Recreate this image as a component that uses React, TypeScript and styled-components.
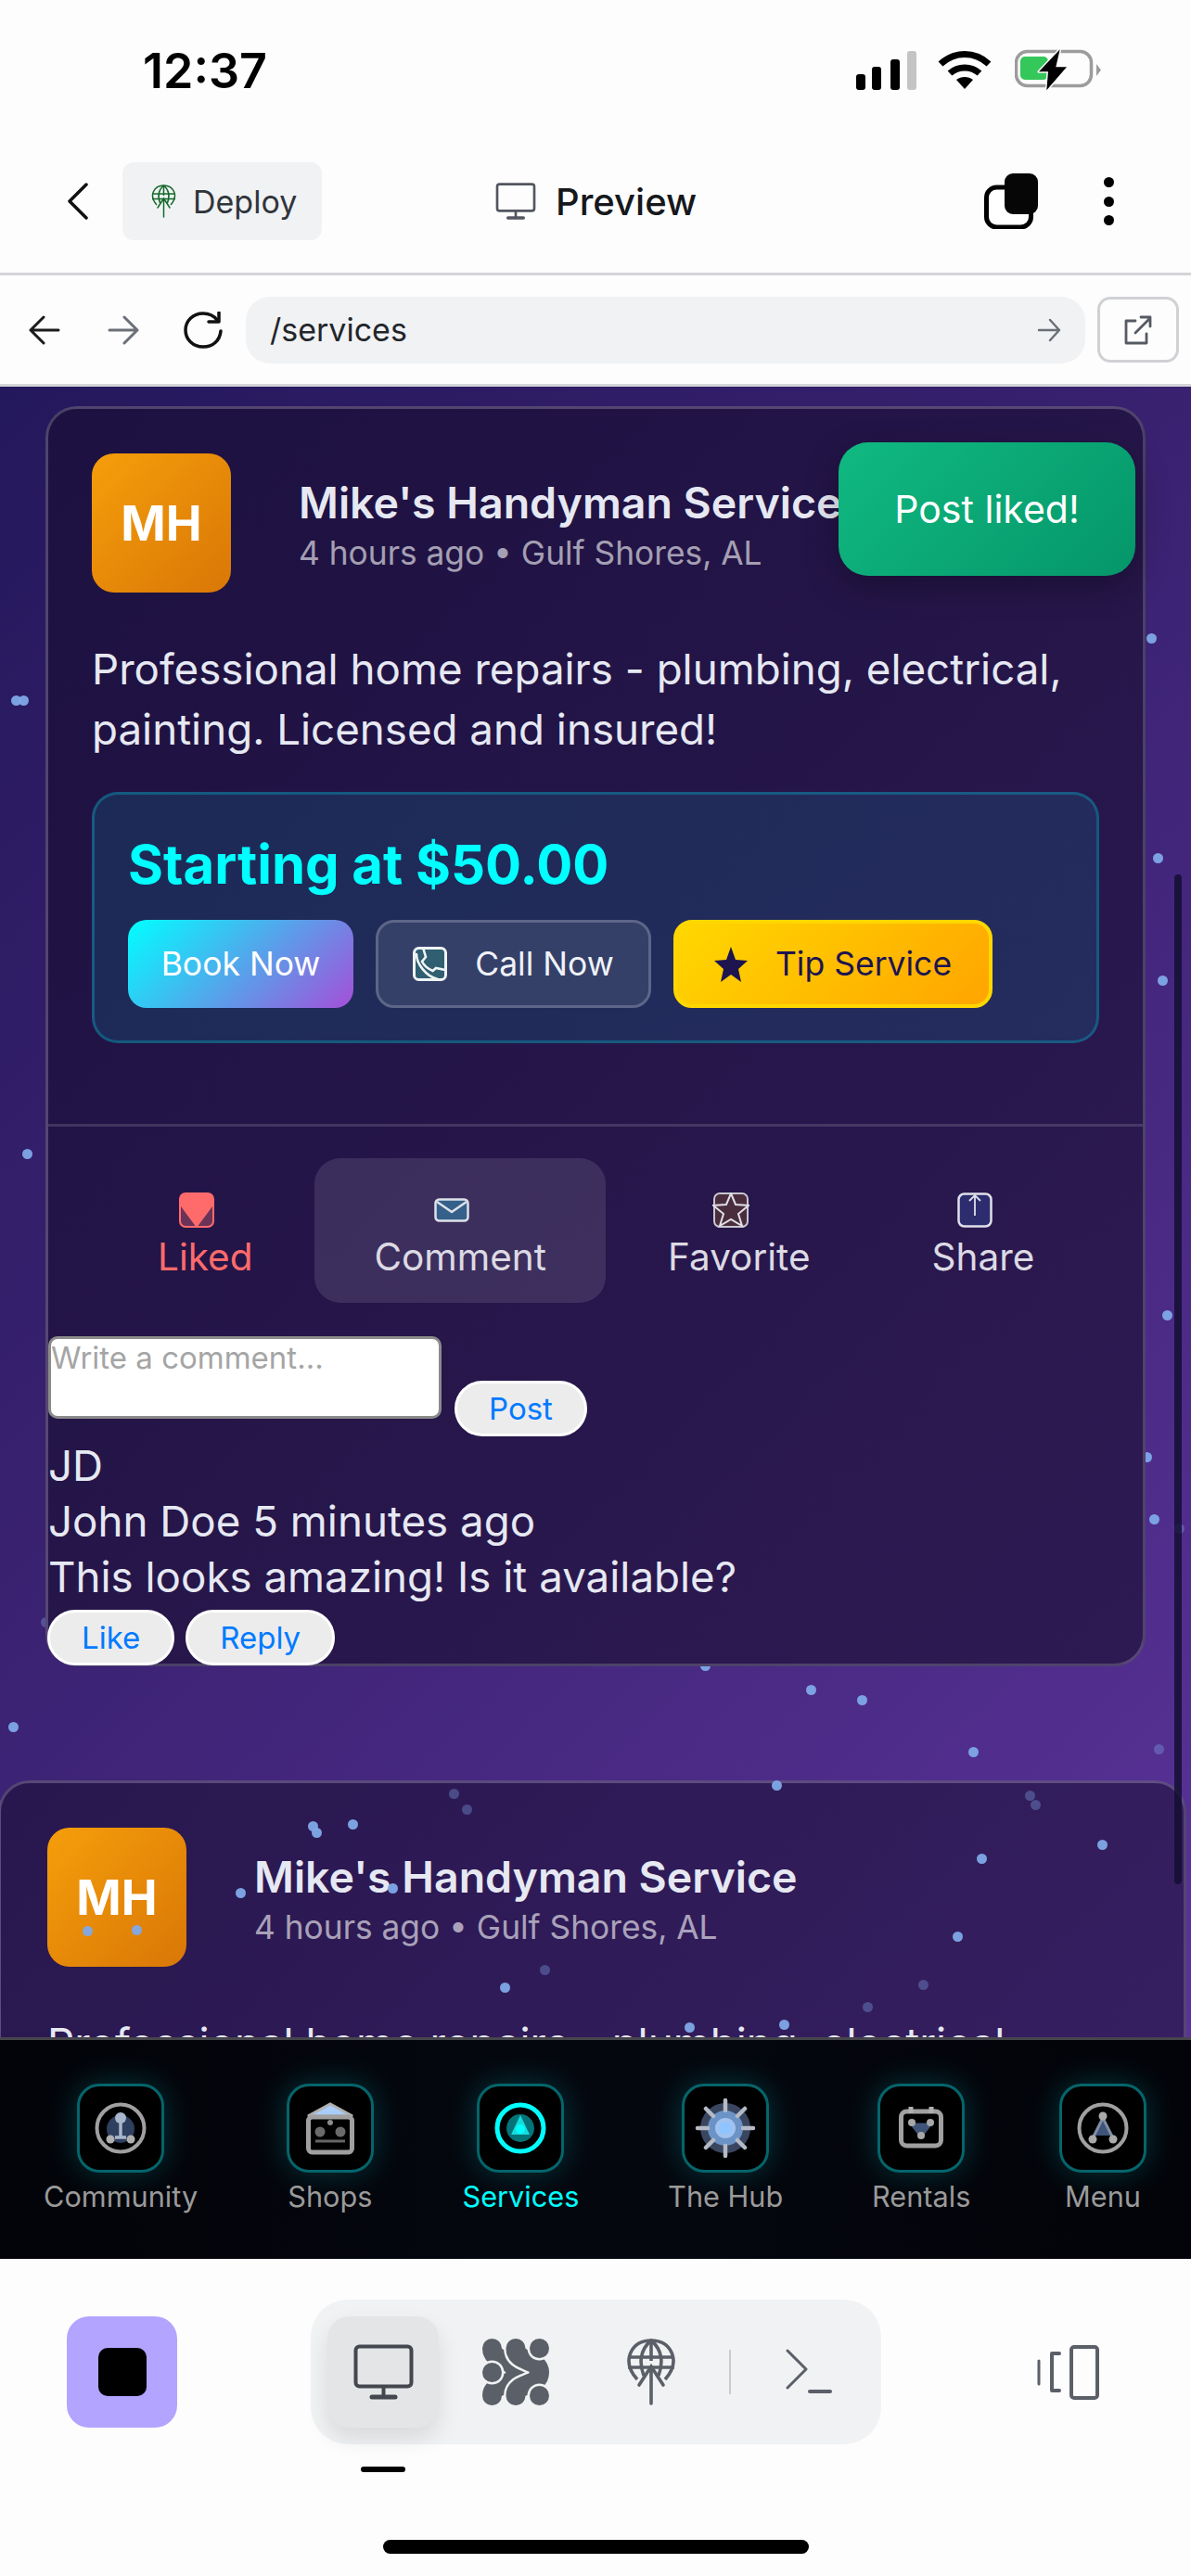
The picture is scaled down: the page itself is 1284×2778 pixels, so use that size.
import styled, { createGlobalStyle } from "styled-components";

const GlobalStyle = createGlobalStyle`
  html, body { margin: 0; padding: 0; background: #fdfdfd; }
  * { box-sizing: border-box; }
  body { font-family: Inter, "Noto Sans", sans-serif; }
`;

// [x, y, faint] in page pixels
const dots: [number, number, boolean][] = [
  [1241, 689, false], [17, 756, false], [25, 756, false], [1248, 926, false], [1253, 1058, false],
  [29, 1245, false], [1258, 1419, false], [1236, 1572, false], [1244, 1639, false], [1271, 1649, true], [49, 1750, true],
  [760, 1797, false], [874, 1823, false], [929, 1834, false], [14, 1863, false], [1049, 1890, false], [1249, 1887, true],
  [489, 1935, true], [503, 1952, true], [837, 1926, false], [1110, 1937, true], [1116, 1947, true],
  [337, 1970, false], [341, 1977, false], [380, 1968, false], [1188, 1990, false], [1058, 2005, false],
  [259, 2042, false], [423, 2037, false], [94, 2083, false], [147, 2082, false], [1032, 2089, false],
  [587, 2125, true], [544, 2144, false], [995, 2141, true], [935, 2165, true], [845, 2184, false], [743, 2187, false],
];

function DeployGlobe({ color, width = 2 }: { color: string; width?: number }) {
  return (
    <svg viewBox="0 0 54 72" width="100%" height="100%" fill="none" stroke={color} strokeWidth={width * 1.5}>
      <path d="M12 44C3 34 1 24 5 15 9 6 17 2 27 2s18 4 22 13c4 9 2 19-7 29" />
      <path d="M19 40C14 26 15 12 27 2c12 10 13 24 8 38" />
      <path d="M27 2v22M2 20h50M2 31h50" />
      <path d="M27 70V33M14 50l13-20 13 20" strokeLinecap="round" />
    </svg>
  );
}

function Monitor({ color }: { color: string }) {
  return (
    <svg viewBox="0 0 65 60" width="100%" height="100%" fill="none" stroke={color}>
      <rect x="2.5" y="2.5" width="60" height="43" rx="4" strokeWidth="4" />
      <path d="M32.5 46v10" strokeWidth="4" />
      <path d="M20 57h25" strokeWidth="5" strokeLinecap="round" />
    </svg>
  );
}

function NavIcon({ kind }: { kind: string }) {
  const gray = "#a0a0a0";
  return (
    <svg viewBox="0 0 66 66" width="66" height="66" fill="none">
      {kind === "community" && (
        <>
          <circle cx="33" cy="33" r="25.5" stroke={gray} strokeWidth="4" />
          <circle cx="33" cy="34" r="15" fill="#2f3f5f" />
          <circle cx="33" cy="22" r="6" fill="#a9b7cc" />
          <path d="M33 24v18M27 43h12" stroke="#a9b7cc" strokeWidth="3.5" />
          <circle cx="22" cy="45" r="4.5" fill="#b0b0b0" />
          <circle cx="44" cy="45" r="4.5" fill="#b0b0b0" />
        </>
      )}
      {kind === "shops" && (
        <>
          <path d="M9 20 33 7l24 13z" fill="#a9cdfa" stroke="#b0b0b0" strokeWidth="3" />
          <rect x="9.5" y="21" width="47" height="38" rx="4" stroke={gray} strokeWidth="5" />
          <circle cx="33" cy="27" r="3" fill="#8c8c8c" />
          <circle cx="22" cy="37" r="5.5" fill="#6a6a6a" />
          <circle cx="44" cy="37" r="5.5" fill="#6a6a6a" />
          <path d="M17 47h32" stroke="#666" strokeWidth="3" />
        </>
      )}
      {kind === "services" && (
        <>
          <circle cx="33" cy="33" r="25" stroke="#00ffff" strokeWidth="5" />
          <circle cx="33" cy="33" r="15" fill="#057478" />
          <path d="M33 19 43 40H23z" fill="#15dcdc" />
          <circle cx="33" cy="34" r="5" fill="#00ffff" />
        </>
      )}
      {kind === "hub" && (
        <>
          <circle cx="33" cy="33" r="27" fill="#3a4660" />
          <circle cx="33" cy="33" r="19" fill="#6b93c6" />
          <circle cx="33" cy="33" r="11" fill="#a2c3ee" />
          <circle cx="33" cy="33" r="7" fill="#8fc4ff" />
          <path d="M33 3v11M33 52v11M3 33h11M52 33h11M12 12l8 8M46 46l8 8M54 12l-8 8M20 46l-8 8" stroke="#b4bbc6" strokeWidth="4.5" strokeLinecap="round" />
        </>
      )}
      {kind === "rentals" && (
        <>
          <rect x="11.5" y="15" width="43" height="37" rx="6" stroke={gray} strokeWidth="5" />
          <path d="M22 10v7M44 10v7" stroke="#b0b0b0" strokeWidth="5" />
          <path d="M23 29 43 29 33 42z" fill="#3f5578" stroke="#3f5578" strokeWidth="3" />
          <circle cx="23" cy="27" r="4" fill="#a8a8a8" />
          <circle cx="43" cy="27" r="4" fill="#a8a8a8" />
          <circle cx="33" cy="41" r="4" fill="#a8a8a8" />
        </>
      )}
      {kind === "menu" && (
        <>
          <circle cx="33" cy="33" r="25.5" stroke={gray} strokeWidth="4" />
          <path d="M33 22 44 41H22z" fill="#40547a" />
          <path d="M33 22 23 42M33 22l10 20" stroke="#7f8da3" strokeWidth="3" />
          <circle cx="33" cy="20" r="4.5" fill="#aaa" />
          <circle cx="22" cy="45" r="4.5" fill="#aaa" />
          <circle cx="44" cy="45" r="4.5" fill="#aaa" />
        </>
      )}
    </svg>
  );
}

// left strand, then right strand drawn over it with a halo so a gap shows between them
const leftStrand = "M10.5 10.5C10.5 26 36 21 36 36.5 36 52 10.5 47 10.5 61.5";
const rightStrand = "M36 10.5C36 26 61.5 21 61.5 36.5 61.5 52 36 47 36 61.5";

function WeaveIcon() {
  const ink = "#5b5f68";
  const pill = "#f1f2f4";
  return (
    <svg viewBox="0 0 73 72" width="73" height="72" fill="none" strokeLinecap="round">
      <path d={leftStrand} stroke={ink} strokeWidth="21" />
      <path d={rightStrand} stroke={pill} strokeWidth="26" />
      <path d={rightStrand} stroke={ink} strokeWidth="21" />
      {[[61.5, 10.5], [10.5, 36.5], [61.5, 61.5]].map(([cx, cy]) => (
        <circle key={cx + "-" + cy} cx={cx} cy={cy} r="10.5" fill={ink} stroke={pill} strokeWidth="5" paintOrder="stroke" />
      ))}
    </svg>
  );
}

const navItems = [
  { kind: "community", label: "Community" },
  { kind: "shops", label: "Shops" },
  { kind: "services", label: "Services", active: true },
  { kind: "hub", label: "The Hub" },
  { kind: "rentals", label: "Rentals" },
  { kind: "menu", label: "Menu" },
];

function PostHead() {
  return (
    <PostHeader>
      <Avatar>MH</Avatar>
      <div>
        <Title>Mike's Handyman Service</Title>
        <Sub>4 hours ago • Gulf Shores, AL</Sub>
      </div>
    </PostHeader>
  );
}

const bodyText = "Professional home repairs - plumbing, electrical, painting. Licensed and insured!";

export default function App() {
  return (
    <Page>
      <GlobalStyle />
      <StatusBar>
        <Time>12:37</Time>
        <StatusIcons>
          <svg width="65" height="42" viewBox="0 0 65 42">
            <rect x="0" y="25" width="10" height="17" rx="3" fill="#000" />
            <rect x="17" y="17" width="10" height="25" rx="3" fill="#000" />
            <rect x="37" y="9" width="10" height="33" rx="3" fill="#000" />
            <rect x="55" y="0" width="10" height="42" rx="3" fill="#c4c4c4" />
          </svg>
          <svg width="58" height="42" viewBox="0 0 58 42" fill="none" stroke="#000" strokeWidth="7">
            <path d="M3 14C18 0 40 0 55 14" />
            <path d="M13 24c9-8 23-8 32 0" />
            <path d="M29 41 20 31c5-4 13-4 18 0z" fill="#000" stroke="none" />
          </svg>
          <svg width="94" height="46" viewBox="0 0 94 46" fill="none">
            <rect x="1.5" y="2.5" width="81" height="37" rx="12" stroke="#9c9c9c" strokeWidth="3.5" />
            <rect x="6" y="8" width="30" height="25" rx="5" fill="#34c759" />
            <path d="M88 16l5 6.5-5 6.5z" fill="#9c9c9c" />
            <path d="M48.7.3 26 24.3h10L34.3 44.3 56 19.3H44.3z" fill="#000" stroke="#fdfdfd" strokeWidth="3" strokeLinejoin="round" paintOrder="stroke" />
          </svg>
        </StatusIcons>
      </StatusBar>

      <TopBar>
        <IconSlot $w={23} $h={40}>
          <svg viewBox="0 0 23 40" width="23" height="40" fill="none" stroke="#111" strokeWidth="3.5" strokeLinecap="round" strokeLinejoin="round">
            <path d="M21 2 3 20l18 18" />
          </svg>
        </IconSlot>
        <DeployButton>
          <IconSlot $w={27} $h={36}>
            <DeployGlobe color="#15692b" />
          </IconSlot>
          Deploy
        </DeployButton>
        <PreviewLabel>
          <IconSlot $w={44} $h={40}>
            <Monitor color="#52565f" />
          </IconSlot>
          Preview
        </PreviewLabel>
        <CopyIcon>
          <svg viewBox="0 0 58 60" width="58" height="60">
            <rect x="2.5" y="15" width="48" height="43" rx="11" fill="#fff" stroke="#000" strokeWidth="5" />
            <rect x="22" y="0" width="36" height="44" rx="9" fill="#060606" />
          </svg>
        </CopyIcon>
        <MoreDots>
          <i />
          <i />
          <i />
        </MoreDots>
      </TopBar>

      <UrlBar>
        <IconSlot $w={34} $h={32}>
          <svg viewBox="0 0 34 32" width="34" height="32" fill="none" stroke="#1b1b1b" strokeWidth="3" strokeLinecap="round" strokeLinejoin="round">
            <path d="M32 16H2M16 2 2 16l14 14" />
          </svg>
        </IconSlot>
        <IconSlot $w={34} $h={32} $left={51}>
          <svg viewBox="0 0 34 32" width="34" height="32" fill="none" stroke="#6b7078" strokeWidth="3" strokeLinecap="round" strokeLinejoin="round">
            <path d="M2 16h30M18 2l14 14-14 14" />
          </svg>
        </IconSlot>
        <IconSlot $w={44} $h={40} $left={47}>
          <svg viewBox="0 0 44 40" width="44" height="40" fill="none" stroke="#111" strokeWidth="3.5" strokeLinecap="round" strokeLinejoin="round">
            <path d="M37 9C33 4 28 2 22 2 11 2 3 10 3 20s8 18 19 18 18-7 19-17" />
            <path d="M39 1v10H28" />
          </svg>
        </IconSlot>
        <UrlField>
          /services
          <IconSlot $w={26} $h={26}>
            <svg viewBox="0 0 26 26" width="26" height="26" fill="none" stroke="#6b7078" strokeWidth="2.5" strokeLinecap="round" strokeLinejoin="round">
              <path d="M2 13h22M14 2l10 11-10 11" />
            </svg>
          </IconSlot>
        </UrlField>
        <OpenButton>
          <svg viewBox="0 0 32 32" width="32" height="32" fill="none" stroke="#555a63" strokeWidth="2.8" strokeLinecap="round" strokeLinejoin="round">
            <path d="M13 6H3v24h22V20" />
            <path d="M13 19 29 3M19 2h10v10" />
          </svg>
        </OpenButton>
      </UrlBar>

      <Viewport>
        <Card>
          <Toast>Post liked!</Toast>
          <PostBody>
            <PostHead />
            <BodyText>{bodyText}</BodyText>
            <PriceBox>
              <Price>Starting at $50.00</Price>
              <PriceActions>
                <BookButton>Book Now</BookButton>
                <CallButton>
                  <svg viewBox="0 0 37 37" width="37" height="37" fill="none" stroke="#f0f3f6" strokeWidth="2.6" strokeLinecap="round">
                    <rect x="1.5" y="1.5" width="34" height="34" rx="5" fill="#2f5f70" strokeWidth="3" />
                    <path d="M11.6 3 14 11 10 16C12 20 17 24 21.6 26L25 23 35 25" />
                    <path d="M4 8C4 18 14 32 27 35" />
                  </svg>
                  Call Now
                </CallButton>
                <TipButton>
                  <svg viewBox="0 0 36 38" width="36" height="38" fill="#1d1450">
                    <path d="M18 0l5 14 13 1-10 9 3 14-11-8-11 8 3-14L0 15l13-1z" />
                  </svg>
                  Tip Service
                </TipButton>
              </PriceActions>
            </PriceBox>
          </PostBody>
          <Actions>
            <ActionButton $color="#ff6b6b">
              <ActionIcon>
                <svg viewBox="0 0 38 38" width="38" height="38">
                  <rect x="1" y="1" width="36" height="36" rx="6" fill="#6b3358" stroke="#ff6b6b" strokeWidth="2" />
                  <path d="M2 6c0-3 2-5 5-5h24c3 0 5 2 5 5v9L19 38 2 15z" fill="#ff6b6b" />
                </svg>
              </ActionIcon>
              Liked
            </ActionButton>
            <ActionButton $active $color="#dcdae4">
              <ActionIcon>
                <svg viewBox="0 0 38 26" width="38" height="26" fill="#35608a" stroke="#dde2ea" strokeWidth="2.5">
                  <rect x="1.5" y="1.5" width="35" height="23" rx="4" />
                  <path d="M3 4 19 15 35 4" fill="none" />
                </svg>
              </ActionIcon>
              Comment
            </ActionButton>
            <ActionButton $color="#dcdae4">
              <ActionIcon>
                <svg viewBox="0 0 40 38" width="40" height="38" fill="none" stroke="#e0dfe6" strokeWidth="2">
                  <rect x="2" y="1" width="36" height="36" rx="6" fill="#4a2d3d" stroke="#c8c6cf" />
                  <path d="M20 1l5 12 14 1-11 9 4 13-12-7-12 7 4-13L1 14l14-1z" />
                </svg>
              </ActionIcon>
              Favorite
            </ActionButton>
            <ActionButton $color="#dcdae4">
              <ActionIcon>
                <svg viewBox="0 0 38 38" width="38" height="38" fill="none" stroke="#dfe0ea" strokeWidth="2.5">
                  <rect x="1.5" y="1.5" width="35" height="35" rx="6" fill="#2c2c6e" />
                  <path d="M19 3v22M13 9l6-6 6 6" strokeWidth="1.8" />
                </svg>
              </ActionIcon>
              Share
            </ActionButton>
          </Actions>
          <CommentForm>
            <CommentInput placeholder="Write a comment..." />
            <PostButton>Post</PostButton>
          </CommentForm>
          <CommentLine>JD</CommentLine>
          <CommentLine>John Doe 5 minutes ago</CommentLine>
          <CommentLine>This looks amazing! Is it available?</CommentLine>
          <CommentActions>
            <PillButton>Like</PillButton>
            <PillButton>Reply</PillButton>
          </CommentActions>
        </Card>

        <SecondCard>
          <PostBody>
            <PostHead />
            <BodyText>{bodyText}</BodyText>
          </PostBody>
        </SecondCard>

        <Particles>
          {dots.map(([x, y, faint], i) => (
            <Dot key={i} $faint={faint} style={{ left: x - 5, top: y - 417 - 6 }} />
          ))}
        </Particles>
        <ScrollThumb />
      </Viewport>

      <BottomNav>
        {navItems.map((item) => (
          <NavItem key={item.label}>
            <NavBox>
              <NavIcon kind={item.kind} />
            </NavBox>
            <NavLabel $active={item.active}>{item.label}</NavLabel>
          </NavItem>
        ))}
      </BottomNav>

      <Footer>
        <FooterRow>
          <StopButton>
            <i />
          </StopButton>
          <ToolPill>
            <ToolActive>
              <IconSlot $w={65} $h={60}>
                <Monitor color="#44474f" />
              </IconSlot>
            </ToolActive>
            <ToolSlot $w={73} $left={47}>
              <WeaveIcon />
            </ToolSlot>
            <ToolSlot $w={54} $left={82}>
              <DeployGlobe color="#5b5f68" width={2.4} />
            </ToolSlot>
            <ToolDivider />
            <ToolSlot $w={52} $left={59}>
              <svg viewBox="0 0 52 50" width="52" height="50" fill="none" stroke="#5b5f68" strokeLinecap="round" strokeLinejoin="round">
                <path d="M2 2l20 20L2 42" strokeWidth="3" />
                <path d="M26 46h22" strokeWidth="4" />
              </svg>
            </ToolSlot>
          </ToolPill>
          <DeviceIcon>
            <svg viewBox="0 0 67 59" width="67" height="59" fill="none" stroke="#5b5f68" strokeLinecap="round">
              <path d="M2 17v25" strokeWidth="3" />
              <path d="M24 9h-8v40h8" strokeWidth="4" strokeLinejoin="round" />
              <rect x="37" y="2" width="28" height="55" rx="3" strokeWidth="4" />
            </svg>
          </DeviceIcon>
        </FooterRow>
        <ToolMark />
        <HomeIndicator />
      </Footer>
    </Page>
  );
}

const Page = styled.div`
  width: 1284px;
  height: 2778px;
  display: flex;
  flex-direction: column;
  overflow: hidden;
  background: #fdfdfd;
  color: #111;
`;

const StatusBar = styled.div`
  height: 140px;
  flex: none;
  display: flex;
  justify-content: space-between;
  padding: 53px 96px 0 154px;
`;

const Time = styled.div`
  font-size: 52px;
  font-weight: 600;
  line-height: 48px;
  height: 48px;
  color: #000;
`;

const StatusIcons = styled.div`
  display: flex;
  align-items: flex-start;
  gap: 23px;
  margin-top: -1px;
  svg:first-child {
    margin-top: 3px;
  }
  svg:nth-child(2) {
    margin-top: 3px;
  }
  svg:last-child {
    margin-left: 2px;
    margin-top: 1px;
  }
`;

const IconSlot = styled.span<{ $w: number; $h: number; $left?: number }>`
  flex: none;
  display: inline-flex;
  align-items: center;
  justify-content: center;
  width: ${(p) => p.$w}px;
  height: ${(p) => p.$h}px;
  margin-left: ${(p) => p.$left ?? 0}px;
`;

const TopBar = styled.div`
  height: 157px;
  flex: none;
  display: flex;
  align-items: center;
  padding: 0 0 0 72px;
  border-bottom: 3px solid #d3d5d8;
`;

const DeployButton = styled.div`
  width: 215px;
  height: 84px;
  margin-left: 37px;
  padding-left: 31px;
  display: flex;
  align-items: center;
  gap: 18px;
  background: #f1f2f4;
  border-radius: 12px;
  font-size: 34px;
  color: #30343b;
`;

const PreviewLabel = styled.div`
  display: flex;
  align-items: center;
  gap: 21px;
  margin-left: 187px;
  font-size: 40px;
  font-weight: 500;
  color: #16181c;
`;

const CopyIcon = styled.div`
  margin-left: 310px;
  height: 60px;
`;

const MoreDots = styled.div`
  margin-left: 71px;
  width: 12px;
  height: 52px;
  display: flex;
  flex-direction: column;
  justify-content: space-between;
  i {
    width: 11px;
    height: 11px;
    border-radius: 50%;
    background: #000;
  }
`;

const UrlBar = styled.div`
  height: 120px;
  flex: none;
  display: flex;
  align-items: center;
  padding: 0 13px 0 31px;
  border-bottom: 3px solid #d3d5d8;
`;

const UrlField = styled.div`
  width: 906px;
  height: 72px;
  margin-left: 24px;
  padding: 0 26px;
  display: flex;
  align-items: center;
  justify-content: space-between;
  background: #f1f2f4;
  border-radius: 26px;
  font-size: 34px;
  color: #23262b;
`;

const OpenButton = styled.div`
  width: 88px;
  height: 71px;
  margin-left: 13px;
  display: flex;
  align-items: center;
  justify-content: center;
  border: 3px solid #cfd1d4;
  border-radius: 14px;
  background: #fdfdfd;
`;

const Viewport = styled.div`
  position: relative;
  flex: none;
  height: 1780px;
  overflow: hidden;
  padding-top: 21px;
  background: linear-gradient(135deg, #24185c 0%, #3b2272 45%, #5a3399 100%);
`;

const Card = styled.section`
  position: relative;
  z-index: 2;
  width: 1186px;
  height: 1359px;
  margin-left: 49px;
  border: 3px solid rgba(255, 255, 255, 0.2);
  border-radius: 34px;
  background: linear-gradient(135deg, #1c1140 0%, #2e1a52 100%);
  color: #e6e8f2;
`;

const SecondCard = styled(Card)`
  z-index: 0;
  width: 1281px;
  height: 700px;
  margin: 123px 0 0 -2px;
  padding-left: 3px;
  background: linear-gradient(135deg, #28174e 0%, #3a2166 100%);
`;

const Toast = styled.div`
  position: absolute;
  top: 36px;
  left: 852px;
  width: 320px;
  height: 144px;
  display: flex;
  align-items: center;
  justify-content: center;
  border-radius: 32px;
  background: linear-gradient(135deg, #10b981, #059669);
  box-shadow: 0 12px 36px rgba(0, 0, 0, 0.28);
  color: #fff;
  font-size: 41px;
`;

const PostBody = styled.div`
  padding: 48px 47px 87px;
`;

const PostHeader = styled.div`
  display: flex;
  align-items: center;
  gap: 73px;
`;

const Avatar = styled.div`
  width: 150px;
  height: 150px;
  flex: none;
  display: flex;
  align-items: center;
  justify-content: center;
  border-radius: 24px;
  background: linear-gradient(135deg, #f59e0b, #d97706);
  color: #fff;
  font-size: 52px;
  font-weight: 700;
`;

const Title = styled.div`
  font-size: 46.5px;
  font-weight: 600;
  line-height: 58px;
  white-space: nowrap;
  margin-top: 5px;
`;

const Sub = styled.div`
  font-size: 35.3px;
  line-height: 48px;
  margin-top: 2px;
  color: rgba(255, 255, 255, 0.6);
  white-space: nowrap;
`;

const BodyText = styled.p`
  margin: 50px 0 0;
  font-size: 45.7px;
  line-height: 65px;
  color: #e6e8f2;
`;

const PriceBox = styled.div`
  margin-top: 35px;
  height: 271px;
  padding: 39px 36px 0;
  border: 3px solid rgba(0, 200, 220, 0.3);
  border-radius: 28px;
  background: linear-gradient(135deg, #1c2a56, #252c5e);
`;

const Price = styled.div`
  font-size: 58px;
  line-height: 72px;
  font-weight: 700;
  color: #00ffff;
`;

const PriceActions = styled.div`
  display: flex;
  gap: 24px;
  margin-top: 24px;
`;

const PriceButton = styled.button`
  height: 95px;
  display: flex;
  align-items: center;
  justify-content: center;
  padding: 0;
  border-radius: 20px;
  border: none;
  font: 400 35.5px Inter, sans-serif;
`;

const BookButton = styled(PriceButton)`
  width: 243px;
  background: linear-gradient(135deg, #00ffff, #a44fd8);
  color: #fff;
`;

const CallButton = styled(PriceButton)`
  width: 297px;
  gap: 30px;
  background: #344068;
  border: 3px solid #5d6688;
  color: #f0f2f8;
`;

const TipButton = styled(PriceButton)`
  width: 344px;
  gap: 30px;
  background: linear-gradient(135deg, #ffd700, #ffa500);
  border: 4px solid #ffd700;
  color: #1d1450;
`;

const Actions = styled.div`
  display: flex;
  gap: 3px;
  padding: 34px 0 36px 54px;
  border-top: 3px solid rgba(255, 255, 255, 0.14);
`;

const ActionButton = styled.div<{ $active?: boolean; $color: string }>`
  height: 156px;
  padding: 14px 64px 0;
  display: flex;
  flex-direction: column;
  align-items: center;
  justify-content: center;
  border-radius: 28px;
  background: ${(p) => (p.$active ? "rgba(255, 255, 255, 0.11)" : "transparent")};
  color: ${(p) => p.$color};
  font-size: 40.5px;
  line-height: 52px;
`;

const ActionIcon = styled.span`
  height: 38px;
  display: flex;
  align-items: center;
  margin-right: 18px;
  margin-bottom: 6px;
`;

const CommentForm = styled.div`
  display: flex;
  align-items: flex-end;
  gap: 14px;
  margin-bottom: 21px;
`;

const CommentInput = styled.textarea`
  width: 424px;
  height: 89px;
  padding: 2px 0 0;
  resize: none;
  border: 3px solid #8b8b8b;
  border-radius: 10px;
  background: #fff;
  font: 400 33px/36px Inter, sans-serif;
  &::placeholder {
    color: #a5a5a5;
  }
`;

const PillButton = styled.button`
  height: 60px;
  padding: 0 34px;
  border: 3px solid #fff;
  border-radius: 30px;
  background: #ececec;
  color: #007aff;
  font: 400 33px Inter, sans-serif;
`;

const PostButton = styled(PillButton)`
  margin-bottom: -19px;
`;

const CommentLine = styled.div`
  font-size: 45.7px;
  line-height: 60px;
  color: #e6e8f2;
`;

const CommentActions = styled.div`
  display: flex;
  gap: 12px;
  margin: 5px 0 0 -1px;
`;

const Particles = styled.div`
  position: absolute;
  inset: 0;
  z-index: 1;
  pointer-events: none;
`;

const Dot = styled.span<{ $faint?: boolean }>`
  position: absolute;
  width: 11px;
  height: 11px;
  border-radius: 50%;
  background: #80a9e8;
  opacity: ${(p) => (p.$faint ? 0.35 : 0.95)};
`;

const ScrollThumb = styled.div`
  position: absolute;
  z-index: 3;
  right: 10px;
  top: 526px;
  width: 8px;
  height: 1089px;
  border-radius: 4px;
  background: rgba(20, 14, 50, 0.85);
`;

const BottomNav = styled.nav`
  position: relative;
  z-index: 4;
  height: 239px;
  flex: none;
  display: flex;
  justify-content: space-between;
  padding: 47px 48px 0 47px;
  border-top: 3px solid #46464c;
  background: linear-gradient(90deg, #030409, #05070f 50%, #030409);
`;

const NavItem = styled.div`
  display: flex;
  flex-direction: column;
  align-items: center;
`;

const NavBox = styled.div`
  width: 94px;
  height: 96px;
  display: flex;
  align-items: center;
  justify-content: center;
  border: 3px solid #05656b;
  border-radius: 24px;
  background: #000;
  box-shadow: 0 0 34px rgba(0, 255, 255, 0.2);
`;

const NavLabel = styled.div<{ $active?: boolean }>`
  margin-top: 6px;
  font-size: 30.7px;
  line-height: 40px;
  white-space: nowrap;
  color: ${(p) => (p.$active ? "#00ffff" : "#9a9a9a")};
`;

const Footer = styled.div`
  position: relative;
  flex: none;
  height: 342px;
  padding-top: 44px;
`;

const FooterRow = styled.div`
  display: flex;
  align-items: center;
`;

const StopButton = styled.div`
  width: 119px;
  height: 120px;
  margin-left: 72px;
  display: flex;
  align-items: center;
  justify-content: center;
  border-radius: 24px;
  background: #b2a4ff;
  i {
    width: 52px;
    height: 52px;
    border-radius: 10px;
    background: #000;
  }
`;

const ToolPill = styled.div`
  width: 615px;
  height: 156px;
  margin-left: 144px;
  padding-left: 18px;
  display: flex;
  align-items: center;
  border-radius: 40px;
  background: #f1f2f4;
`;

const ToolActive = styled.div`
  width: 120px;
  height: 120px;
  flex: none;
  display: flex;
  align-items: center;
  justify-content: center;
  border-radius: 24px;
  background: #e4e5e7;
  box-shadow: 0 12px 24px rgba(0, 0, 0, 0.1);
`;

const ToolSlot = styled.div<{ $w: number; $left: number }>`
  width: ${(p) => p.$w}px;
  height: 72px;
  flex: none;
  margin-left: ${(p) => p.$left}px;
  display: flex;
  align-items: center;
  justify-content: center;
`;

const ToolDivider = styled.div`
  width: 2px;
  height: 48px;
  flex: none;
  margin-left: 57px;
  background: #c8cacd;
`;

const DeviceIcon = styled.div`
  margin-left: 168px;
  height: 59px;
`;

const ToolMark = styled.div`
  position: absolute;
  left: 389px;
  top: 224px;
  width: 48px;
  height: 6px;
  border-radius: 3px;
  background: #000;
`;

const HomeIndicator = styled.div`
  position: absolute;
  left: 413px;
  top: 303px;
  width: 459px;
  height: 15px;
  border-radius: 8px;
  background: #000;
`;
